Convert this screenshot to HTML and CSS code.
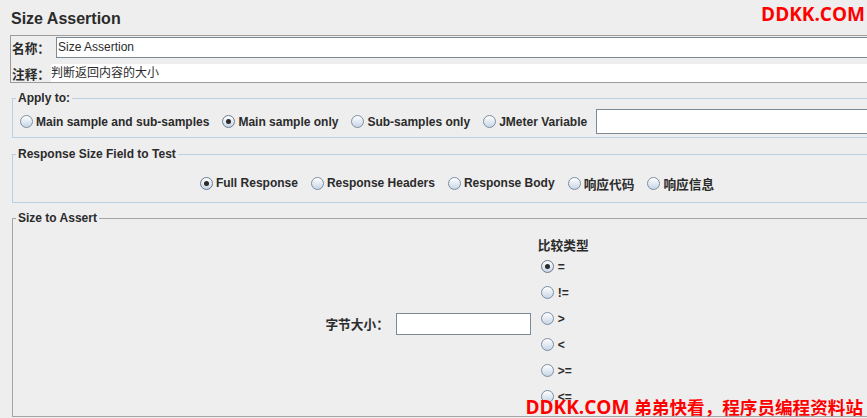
FILE: index.html
```html
<!DOCTYPE html>
<html lang="zh-CN">
<head>
    <meta charset="UTF-8">
    <title>Size Assertion</title>
    <link rel="stylesheet" href="styles.css">
</head>
<body>

    <div class="page">
        <h1 class="title">Size Assertion</h1>

        <div class="name-panel">
            <div class="name-row">
                <span class="field-label name-label cjk">名称：</span>
                <div class="text-field name-field">Size Assertion</div>
            </div>
            <div class="comment-row">
                <span class="field-label comment-label cjk">注释：</span>
                <div class="comment-field">判断返回内容的大小</div>
            </div>
        </div>

        <fieldset class="group">
            <legend>Apply to:</legend>
            <div class="radio-row apply-row">
                <div class="radio"><span class="dot"></span>Main sample and sub-samples</div>
                <div class="radio checked"><span class="dot"></span>Main sample only</div>
                <div class="radio"><span class="dot"></span>Sub-samples only</div>
                <div class="radio"><span class="dot"></span>JMeter Variable</div>
                <div class="text-field var-field"></div>
            </div>
        </fieldset>

        <fieldset class="group">
            <legend>Response Size Field to Test</legend>
            <div class="radio-row field-row">
                <div class="radio checked"><span class="dot"></span>Full Response</div>
                <div class="radio"><span class="dot"></span>Response Headers</div>
                <div class="radio"><span class="dot"></span>Response Body</div>
                <div class="radio cjk"><span class="dot"></span>响应代码</div>
                <div class="radio cjk"><span class="dot"></span>响应信息</div>
            </div>
        </fieldset>

        <fieldset class="group size-group">
            <legend>Size to Assert</legend>
            <div class="size-body">
                <span class="size-label cjk">字节大小：</span>
                <div class="text-field size-field"></div>
                <div class="compare">
                    <div class="compare-title cjk">比较类型</div>
                    <div class="radio checked"><span class="dot"></span>=</div>
                    <div class="radio"><span class="dot"></span>!=</div>
                    <div class="radio"><span class="dot"></span>&gt;</div>
                    <div class="radio"><span class="dot"></span>&lt;</div>
                    <div class="radio"><span class="dot"></span>&gt;=</div>
                    <div class="radio"><span class="dot"></span>&lt;=</div>
                </div>
            </div>
        </fieldset>
    </div>

    <div class="watermark wm-top">DDKK.COM</div>
    <div class="watermark wm-bottom"><span>DDKK.COM</span> <span class="wm-cjk">弟弟快看，程序员编程资料站</span></div>

</body>
</html>
```

FILE: styles.css
```css
html, body {
    overflow: hidden;
}

body {
    margin: 0;
    height: 418px;
    position: relative;
    background-color: #eeeeee;
    color: #2b2b2b;
    font-family: 'Liberation Sans', 'Noto Sans CJK SC', sans-serif;
    font-size: 12px;
    font-weight: bold;
}

.cjk {
    font-size: 12.7px;
}

.page {
    width: 892px;
    padding-left: 10px;
}

.title {
    margin: 10px 0 0 1px;
    font-size: 16px;
    line-height: 18px;
}

/* name / comment block */
.name-panel {
    width: 900px;
    margin-top: 7px;
    padding: 1px 0 0 1px;
    border: 1px solid #9c9c9c;
}

.name-row {
    display: flex;
    align-items: center;
    height: 21px;
}

.comment-row {
    display: flex;
    align-items: center;
    height: 18px;
    margin-top: 6px;
}

.name-label {
    width: 44px;
}

.comment-label {
    width: 39px;
}

.text-field {
    box-sizing: border-box;
    height: 21px;
    padding: 0 1px;
    border: 1px solid #7a8a99;
    background-color: #ffffff;
    font-weight: normal;
    line-height: 19px;
}

.name-field {
    flex: 1;
}

.comment-field {
    flex: 1;
    height: 18px;
    line-height: 18px;
    background-color: #ffffff;
    font-weight: normal;
}

/* titled groups */
.group {
    box-sizing: border-box;
    width: 890px;
    min-width: 0;
    margin: 8px 0 0 2px;
    padding: 0;
    border: 1px solid #b8cfe5;
}

.group + .group {
    margin-top: 9px;
}

.group legend {
    margin-left: 3px;
    padding: 0 2px;
    line-height: 14px;
}

.size-group {
    border-color: #a5a5a5;
}

.group.size-group {
    margin-top: 8px;
}

.radio-row {
    display: flex;
    align-items: center;
}

.radio {
    display: flex;
    align-items: center;
    margin-right: 13px;
    white-space: nowrap;
}

.radio .dot {
    position: relative;
    box-sizing: border-box;
    width: 13px;
    height: 13px;
    margin-right: 3px;
    border: 1px solid #7d8ea2;
    border-radius: 50%;
    background: linear-gradient(#ffffff, #c7d5e6);
}

.radio.checked .dot {
    border-color: #6b7b8d;
}

.radio.checked .dot:after {
    content: '';
    position: absolute;
    top: 3px;
    left: 3px;
    width: 5px;
    height: 5px;
    border-radius: 50%;
    background-color: #2a2a2a;
}

.apply-row {
    height: 25px;
    margin-top: 4px;
    padding: 0 6px 3px 7px;
}

.apply-row .radio:nth-child(4) {
    margin-right: 9px;
}

.var-field {
    flex: 1;
    height: 25px;
}

.field-row {
    justify-content: center;
    height: 24px;
    margin-top: 10px;
    padding-bottom: 7px;
}

.field-row .radio:last-child {
    margin-right: 0;
}

/* size to assert */
.size-body {
    box-sizing: border-box;
    display: flex;
    justify-content: center;
    align-items: center;
    height: 191px;
    padding-top: 6px;
}

.size-label {
    margin-right: 7px;
}

.size-field {
    width: 135px;
    height: 22px;
    margin-right: 7px;
}

.compare {
    display: flex;
    flex-direction: column;
}

.compare-title {
    line-height: 16px;
}

.compare .radio {
    height: 26px;
    margin: 0 0 0 3px;
}

.compare .radio .dot {
    margin-right: 4px;
}

/* site watermark */
.watermark {
    position: absolute;
    color: #ff0000;
    font-family: 'Open Sans', 'Noto Sans CJK SC', sans-serif;
    font-size: 19px;
    font-weight: bold;
    line-height: 20px;
    white-space: nowrap;
}

.wm-top {
    top: 4px;
    right: 2px;
}

.wm-bottom {
    top: 397px;
    right: 4px;
}

.wm-cjk {
    font-family: 'Noto Sans CJK SC', sans-serif;
    font-size: 17.6px;
}
```
